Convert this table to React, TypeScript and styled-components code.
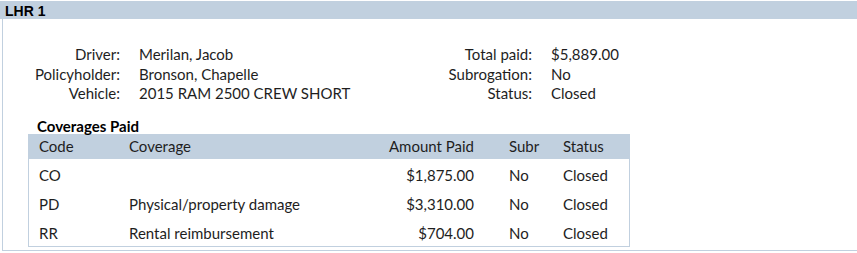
import { FC, Fragment } from "react"
import styled, { createGlobalStyle } from "styled-components"

const GlobalStyle = createGlobalStyle`
  body {
    margin: 0;
    background: #fff;
    color: #1e1e1e;
    font-family: Lato, "Open Sans", sans-serif;
    font-size: 15px;
  }
`

const Panel = styled.section`
  padding-top: 1px;
  width: 857px;
`

const PanelHeader = styled.div`
  height: 18px;
  background: #c1d0df;
  padding-left: 5px;
  font-family: "Liberation Sans", Arial, sans-serif;
  font-weight: bold;
  font-size: 14px;
  line-height: 20px;
  color: #000;
`

const PanelBody = styled.div`
  margin-left: 2px;
  height: 232px;
  border-left: 1px solid #c1d0df;
  border-bottom: 1px solid #c1d0df;
  padding-top: 26px;
  box-sizing: border-box;
`

const InfoGrid = styled.div`
  display: grid;
  grid-template-columns: 117px 251px 123px auto;
  column-gap: 19px;
  line-height: 19.5px;
`

const Label = styled.span`
  text-align: right;
  white-space: nowrap;
`

const Value = styled.span`
  white-space: nowrap;
`

const Coverages = styled.div`
  margin: 14px 0 0 25px;
  width: 602px;
`

const CoveragesTitle = styled.div`
  padding-left: 9px;
  font-weight: bold;
  line-height: 16px;
  color: #000;
`

const Table = styled.div`
  border: 1px solid #c1d0df;
  border-top: none;
`

const Row = styled.div<{ $head?: boolean }>`
  display: grid;
  grid-template-columns: 90px 240px 140px 54px 75px;
  height: ${(p) => (p.$head ? 25 : 29)}px;
  align-items: center;
  padding-top: ${(p) => (p.$head ? 0 : 3)}px;
  box-sizing: border-box;
  background: ${(p) => (p.$head ? "#c1d0df" : "transparent")};
`

const Cell = styled.span<{ $right?: boolean }>`
  padding: ${(p) => (p.$right ? "0 25px 0 10px" : "0 10px")};
  text-align: ${(p) => (p.$right ? "right" : "left")};
  white-space: nowrap;
`

const info = [
  ["Driver:", "Merilan, Jacob", "Total paid:", "$5,889.00"],
  ["Policyholder:", "Bronson, Chapelle", "Subrogation:", "No"],
  ["Vehicle:", "2015 RAM 2500 CREW SHORT", "Status:", "Closed"],
]

const coverages = [
  ["CO", "", "$1,875.00", "No", "Closed"],
  ["PD", "Physical/property damage", "$3,310.00", "No", "Closed"],
  ["RR", "Rental reimbursement", "$704.00", "No", "Closed"],
]

const App: FC = () => {
  return (
    <>
      <GlobalStyle />
      <Panel>
        <PanelHeader>LHR 1</PanelHeader>
        <PanelBody>
          <InfoGrid>
            {info.map(([l1, v1, l2, v2]) => (
              <Fragment key={l1}>
                <Label>{l1}</Label>
                <Value>{v1}</Value>
                <Label>{l2}</Label>
                <Value>{v2}</Value>
              </Fragment>
            ))}
          </InfoGrid>
          <Coverages>
            <CoveragesTitle>Coverages Paid</CoveragesTitle>
            <Table>
              <Row $head>
                <Cell>Code</Cell>
                <Cell>Coverage</Cell>
                <Cell $right>Amount Paid</Cell>
                <Cell>Subr</Cell>
                <Cell>Status</Cell>
              </Row>
              {coverages.map(([code, name, amount, subr, status]) => (
                <Row key={code}>
                  <Cell>{code}</Cell>
                  <Cell>{name}</Cell>
                  <Cell $right>{amount}</Cell>
                  <Cell>{subr}</Cell>
                  <Cell>{status}</Cell>
                </Row>
              ))}
            </Table>
          </Coverages>
        </PanelBody>
      </Panel>
    </>
  )
}

export default App
